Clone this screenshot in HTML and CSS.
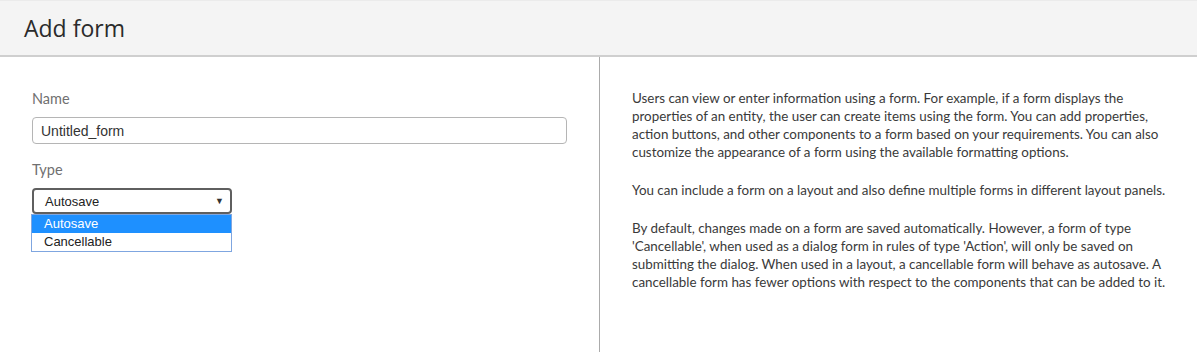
FILE: index.html
```html
<!DOCTYPE html>
<html lang="en">
<head>
    <meta charset="UTF-8" />
    <title>Add form</title>
    <link rel="stylesheet" href="styles.css">
</head>
<body>
    <header class="page-header">
        <h1>Add form</h1>
    </header>

    <main class="content">
        <section class="form-panel">
            <label class="field-label" for="formName">Name</label>
            <input type="text" id="formName" class="text-input" value="Untitled_form" />

            <label class="field-label">Type</label>
            <div class="select-wrap">
                <div class="select-box">
                    <span>Autosave</span>
                    <span class="select-arrow">&#9660;</span>
                </div>
                <ul class="select-menu">
                    <li class="selected">Autosave</li>
                    <li>Cancellable</li>
                </ul>
            </div>
        </section>

        <section class="help-panel">
            <p>Users can view or enter information using a form. For example, if a form displays the properties of an entity, the user can create items using the form. You can add properties, action buttons, and other components to a form based on your requirements. You can also customize the appearance of a form using the available formatting options.</p>
            <p>You can include a form on a layout and also define multiple forms in different layout panels.</p>
            <p>By default, changes made on a form are saved automatically. However, a form of type 'Cancellable', when used as a dialog form in rules of type 'Action', will only be saved on submitting the dialog. When used in a layout, a cancellable form will behave as autosave. A cancellable form has fewer options with respect to the components that can be added to it.</p>
        </section>
    </main>
</body>
</html>
```

FILE: styles.css
```css
/* General Reset */
* {
    box-sizing: border-box;
    margin: 0;
    padding: 0;
}

body {
    font-family: Lato, 'Open Sans', sans-serif;
    color: #333;
    background-color: #fff;
}

/* Header */
.page-header {
    height: 57px;
    background-color: #f4f4f4;
    border-top: 1px solid #ebebeb;
    border-bottom: 2px solid #cfcfcf;
    padding: 0 24px;
    display: flex;
    align-items: center;
}

.page-header h1 {
    font-family: 'Open Sans', sans-serif;
    font-size: 23px;
    font-weight: 400;
    color: #2b2b2b;
    margin-top: -1px;
}

/* Two column body */
.content {
    display: flex;
    height: calc(100vh - 57px);
}

.form-panel {
    width: 599px;
    padding: 33px 32px 0 32px;
    display: flex;
    flex-direction: column;
    align-items: flex-start;
}

.field-label {
    font-size: 14.5px;
    line-height: 18px;
    color: #707070;
    margin-bottom: 9px;
}

.text-input {
    width: 535px;
    height: 27px;
    border: 1px solid #b5b5b5;
    border-radius: 4px;
    padding: 0 8px;
    font-family: 'Liberation Sans', Arial, sans-serif;
    font-size: 14px;
    color: #333;
    margin-bottom: 17px;
    outline: none;
}

/* Fake select, shown open */
.select-wrap {
    position: relative;
    width: 200px;
}

.select-box {
    height: 26px;
    border: 2px solid #5f5f5f;
    border-radius: 4px;
    padding: 0 6px 0 11px;
    display: flex;
    align-items: center;
    justify-content: space-between;
    font-family: 'Liberation Sans', Arial, sans-serif;
    font-size: 13px;
    color: #222;
}

.select-arrow {
    font-size: 9px;
    color: #333;
}

.select-menu {
    position: absolute;
    top: 26px;
    left: -1px;
    width: 201px;
    list-style: none;
    background-color: #fff;
    border: 1px solid #7fa6e0;
    font-family: 'Liberation Sans', Arial, sans-serif;
    font-size: 13px;
    color: #222;
}

.select-menu li {
    height: 18px;
    line-height: 18px;
    padding-left: 12px;
}

.select-menu li.selected {
    background-color: #1e90ff;
    color: #fff;
}

/* Help text */
.help-panel {
    flex: 1;
    border-left: 1px solid #ababab;
    padding: 32px 31.4px 0 32px;
}

.help-panel p {
    font-size: 13.4px;
    line-height: 18px;
    color: #3a3a3a;
    margin-bottom: 20px;
}

.help-panel p:last-child {
    margin-bottom: 0;
}
```
